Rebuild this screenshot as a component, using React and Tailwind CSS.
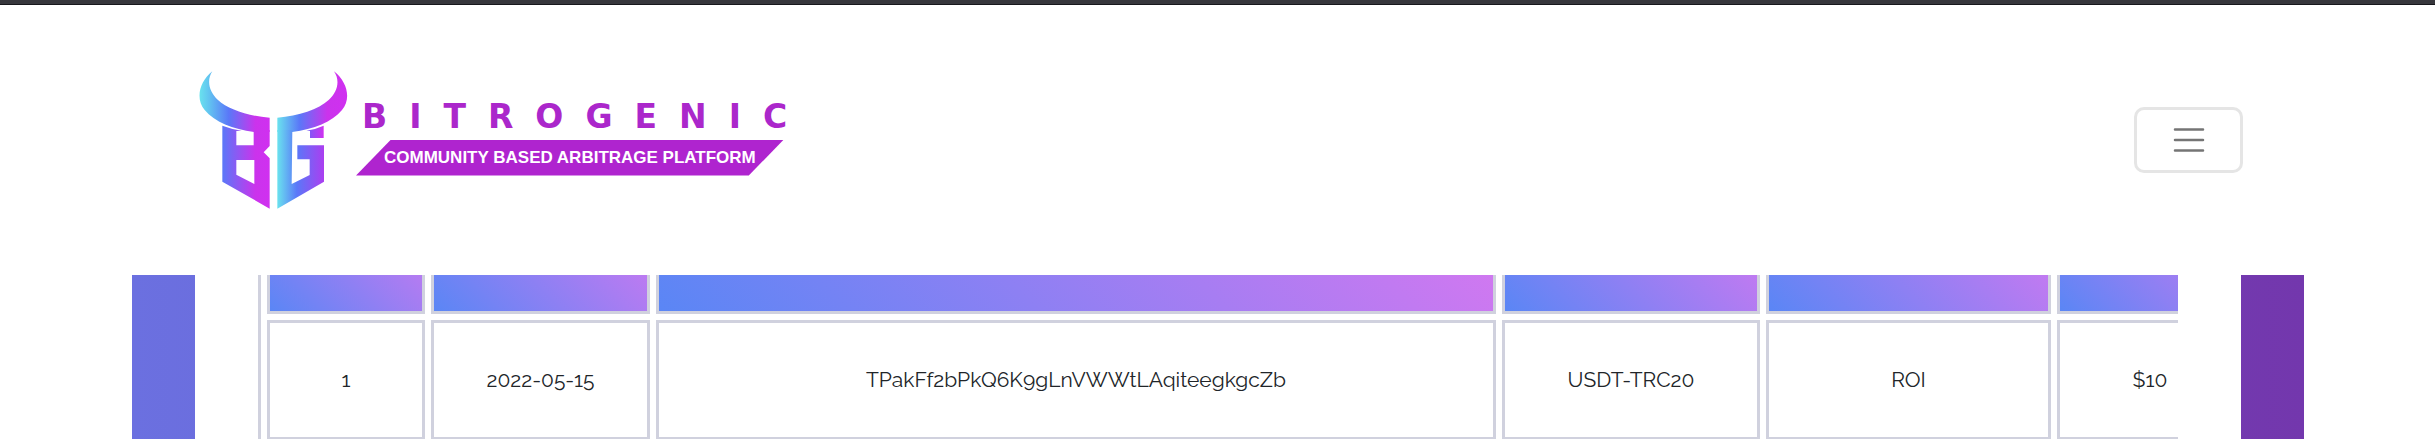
const columns = [
  { key: "id", width: "w-[158px]" },
  { key: "date", width: "w-[219px]" },
  { key: "hash", width: "w-[840px]" },
  { key: "currency", width: "w-[258px]" },
  { key: "type", width: "w-[285px]" },
  { key: "amount", width: "w-[186px]" },
];

const rows = [
  {
    id: "1",
    date: "2022-05-15",
    hash: "TPakFf2bPkQ6K9gLnVWWtLAqiteegkgcZb",
    currency: "USDT-TRC20",
    type: "ROI",
    amount: "$10",
  },
];

const BullMark = () => (
  <svg viewBox="55 60 450 420" className="h-[140px] w-[150px] shrink-0" aria-hidden="true">
    <defs>
      <linearGradient id="hornLeft" gradientUnits="userSpaceOnUse" x1="58" y1="0" x2="270" y2="0">
        <stop offset="0" stopColor="#6ae4ee" />
        <stop offset="0.14" stopColor="#62c4f0" />
        <stop offset="0.42" stopColor="#5a78f8" />
        <stop offset="0.8" stopColor="#cb33ec" />
        <stop offset="1" stopColor="#d030f0" />
      </linearGradient>
      <linearGradient id="hornRight" gradientUnits="userSpaceOnUse" x1="292" y1="0" x2="502" y2="0">
        <stop offset="0" stopColor="#6ae4ee" />
        <stop offset="0.32" stopColor="#5a78f8" />
        <stop offset="0.72" stopColor="#cb33ec" />
        <stop offset="1" stopColor="#d030f0" />
      </linearGradient>
      <linearGradient id="letterB" gradientUnits="userSpaceOnUse" x1="128" y1="0" x2="270" y2="0">
        <stop offset="0" stopColor="#5a78f8" />
        <stop offset="0.7" stopColor="#cb33ec" />
        <stop offset="1" stopColor="#d030f0" />
      </linearGradient>
      <linearGradient id="letterG" gradientUnits="userSpaceOnUse" x1="292" y1="0" x2="434" y2="0">
        <stop offset="0" stopColor="#6ae4ee" />
        <stop offset="0.42" stopColor="#5a78f8" />
        <stop offset="1" stopColor="#ac3df0" />
      </linearGradient>
      <linearGradient id="serifG" gradientUnits="userSpaceOnUse" x1="385" y1="0" x2="432" y2="0">
        <stop offset="0" stopColor="#7a5cf6" />
        <stop offset="1" stopColor="#d030f0" />
      </linearGradient>
    </defs>
    <path
      fill="url(#hornLeft)"
      d="M98 64C60 95 46 145 75 180C104 216 160 238 223 246L270 246V203C205 198 145 178 115 150C88 124 80 92 98 64Z"
    />
    <path
      fill="url(#letterB)"
      fillRule="evenodd"
      d="M128 227Q154 237 186 242L170 243V286H222V240H270V288L252 307L270 325V476L128 395ZM170 330V374L224 402V330Z"
    />
    <path
      fill="url(#hornRight)"
      d="M463 64C502 95 516 145 487 180C458 216 402 238 338 246L293 246V203C357 198 417 178 447 150C474 124 482 92 463 64Z"
    />
    <path
      fill="url(#letterG)"
      d="M293 240H338L336 402L390 375V328L353 328V286H433V395L293 476Z"
    />
    <path fill="url(#serifG)" d="M380 242Q408 238 432 227V264H391V243Z" />
  </svg>
);

const Logo = () => (
  <a href="#" className="flex items-center gap-2">
    <BullMark />
    <div className="flex flex-col gap-[11px]">
      <span className="-mr-8 pl-1.5 font-['DejaVu_Sans',sans-serif] text-[33px] leading-6 font-bold tracking-[22px] text-[#ab27cb]">
        BITROGENIC
      </span>
      <span className="bg-[#af24cf] px-7 text-center font-['Liberation_Sans',sans-serif] text-[17px] leading-9 font-bold whitespace-nowrap text-white [clip-path:polygon(35px_0,100%_0,calc(100%-35px)_100%,0_100%)]">
        COMMUNITY BASED ARBITRAGE PLATFORM
      </span>
    </div>
  </a>
);

const Header = () => (
  <header className="flex h-[270px] shrink-0 items-center justify-between pr-48 pl-[198px]">
    <Logo />
    <button
      type="button"
      aria-label="Toggle navigation"
      className="flex h-[66px] w-[109px] items-center justify-center rounded-[10px] border-3 border-[#e5e5e5]"
    >
      <svg
        viewBox="0 0 32 24"
        className="h-6 w-8"
        fill="none"
        stroke="#757575"
        strokeWidth="2.5"
        strokeLinecap="round"
      >
        <path d="M2 1.5H30M2 12H30M2 22.5H30" />
      </svg>
    </button>
  </header>
);

const TransactionTable = () => (
  <div className="overflow-hidden">
    {/* header row is scrolled partly under the navbar */}
    <table className="-mt-[90px] w-[1994px] table-fixed border-separate border-spacing-[6px] border-3 border-[#d0d1de] text-center text-[21px] text-[#212529]">
      <thead>
        <tr>
          {columns.map((col) => (
            <th
              key={col.key}
              className={`h-[120px] border-3 border-[#d0d1de] bg-[linear-gradient(45deg,#5a86f5,#da77f0)] ${col.width}`}
            />
          ))}
        </tr>
      </thead>
      <tbody>
        {rows.map((row) => (
          <tr key={row.id}>
            {columns.map((col) => (
              <td key={col.key} className="h-[120px] border-3 border-[#d0d1de]">
                {row[col.key]}
              </td>
            ))}
          </tr>
        ))}
      </tbody>
    </table>
  </div>
);

const App = () => {
  return (
    <div className="flex h-screen flex-col overflow-hidden bg-white font-['Raleway','Lato',sans-serif]">
      <div className="h-[5px] shrink-0 border-b border-[#17171c] bg-[#37373c]" />
      <Header />
      <main className="min-h-0 flex-1 overflow-hidden pr-[131px] pl-[132px]">
        <section className="bg-[linear-gradient(90deg,#6b70e0,#7337ad)] px-[63px]">
          <div className="bg-white px-[63px]">
            <TransactionTable />
          </div>
        </section>
      </main>
    </div>
  );
};

export default App;
